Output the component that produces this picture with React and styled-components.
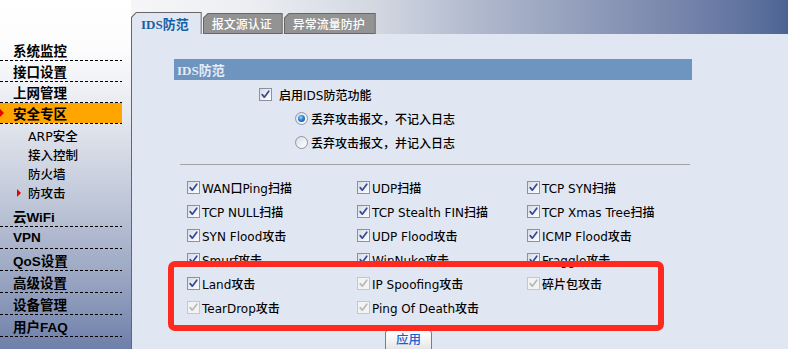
import React from 'react';
import styled, { createGlobalStyle } from 'styled-components';

const GlobalStyle = createGlobalStyle`
  html, body { margin: 0; padding: 0; }
  body {
    width: 788px; height: 349px; overflow: hidden; background: #e1e7f2;
    font-family: "DejaVu Sans", "Noto Sans CJK SC", sans-serif;
  }
  * { box-sizing: border-box; }
`;

const Page = styled.div`
  display: flex;
  width: 788px;
  height: 349px;
  overflow: hidden;
`;

/* ---------- sidebar ---------- */

const Sidebar = styled.nav`
  flex: none;
  width: 131px;
  height: 100%;
  padding-top: 40px;
  background: linear-gradient(to bottom, #ffffff 0%, #fcfcfd 14%, #e5e8ef 33%, #c4cbdb 55%, #9da8c4 78%, #6e7fa9 100%);
`;

const Menu = styled.div`
  width: 122px;
  display: flex;
  flex-direction: column;
`;

const dashLine = 'repeating-linear-gradient(to right, #000 0 3px, transparent 3px 5px)';

const MenuItem = styled.div`
  position: relative;
  height: ${p => (p.$tall ? 22 : 21)}px;
  padding: 0 0 1px 13px;
  display: flex;
  align-items: center;
  font: bold 13.5px "Liberation Sans", "Noto Sans CJK SC", sans-serif;
  color: #000;
  white-space: nowrap;
  background:
    ${dashLine} left bottom / 100% 1px no-repeat,
    linear-gradient(${p => (p.$active ? '#ffa500, #ffa500' : 'transparent, transparent')}) left top / 100% calc(100% - 1px) no-repeat;

  ${p => p.$active && `
    &::before {
      content: "";
      position: absolute;
      left: 0; top: 50%; margin-top: -5px;
      border-left: 4px solid #e60000;
      border-top: 4.5px solid transparent;
      border-bottom: 4.5px solid transparent;
    }
  `}
`;

const SubMenu = styled.div`
  display: flex;
  flex-direction: column;
  padding: 2px 0 3px;
`;

const SubItem = styled.div`
  position: relative;
  height: 19px;
  padding-left: 28px;
  display: flex;
  align-items: center;
  font: 500 12.5px "DejaVu Sans", "Noto Sans CJK SC", sans-serif;
  color: #000;
  white-space: nowrap;

  ${p => p.$current && `
    &::before {
      content: "";
      position: absolute;
      left: 17px; top: 50%; margin-top: -4px;
      border-left: 4px solid #e60000;
      border-top: 4px solid transparent;
      border-bottom: 4px solid transparent;
    }
  `}
`;

/* ---------- main ---------- */

const Main = styled.main`
  flex: 1;
  min-width: 0;
  display: flex;
  flex-direction: column;
`;

const TabBar = styled.div`
  flex: none;
  height: 34px;
  display: flex;
  align-items: flex-end;
  gap: 1px;
  background: linear-gradient(to right, #f6f6f8 0%, #eceef2 18%, #d1d6e0 38%, #afb8cd 53%, #949fbc 68%, #7584aa 84%, #5a6e9c 96%, #4b6391 100%);
`;

const Tab = styled.div`
  display: flex;
  height: ${p => (p.$active ? 22 : 21)}px;
  padding: 1px 1px ${p => (p.$active ? 0 : 1)}px 1px;
  background: #666;
  clip-path: polygon(5px 0, 100% 0, 100% 100%, 0 100%, 0 5px);
`;

const TabFace = styled.div`
  flex: 1;
  display: flex;
  align-items: center;
  padding: ${p => (p.$active ? '0 12px 0 9px' : '0 10px 0 8px')};
  background: ${p => (p.$active ? '#e1e7f2' : '#939393')};
  clip-path: polygon(4.5px 0, 100% 0, 100% 100%, 0 100%, 0 4.5px);
  color: ${p => (p.$active ? '#1660a6' : '#ffffff')};
  font: ${p => (p.$active
    ? 'bold 13px "Liberation Serif", "Noto Sans CJK SC", serif'
    : '500 12px "Noto Sans CJK SC", sans-serif')};
  white-space: nowrap;
`;

const Panel = styled.section`
  position: relative;
  flex: 1;
  background: #e1e7f2;
  border-left: 1px solid #666;
  padding: 25px 0 0 42px;
`;

const Form = styled.div`
  width: 518px;
  display: flex;
  flex-direction: column;
`;

const SectionTitle = styled.h2`
  margin: 0;
  height: 21px;
  padding-left: 3px;
  display: flex;
  align-items: center;
  background: #6e94c0;
  color: #e4ebf5;
  font: bold 13px "Liberation Serif", "Noto Sans CJK SC", serif;
`;

const OptionRow = styled.label`
  height: 24px;
  display: flex;
  align-items: center;
  gap: ${p => (p.$level === 2 ? 3 : 7)}px;
  padding-left: ${p => (p.$level === 2 ? 121 : 85)}px;
  margin-top: ${p => (p.$first ? 2 : 0)}px;
  font: 500 12px "DejaVu Sans", "Noto Sans CJK SC", sans-serif;
  color: #000;
  white-space: nowrap;
`;

const Divider = styled.hr`
  margin: 10px 0 10px 6px;
  width: 510px;
  height: 1px;
  border: 0;
  background: #a3a3a3;
`;

const CheckGrid = styled.div`
  margin-left: 13px;
  display: grid;
  grid-template-columns: repeat(3, 170px);
  grid-auto-rows: 24px;
`;

const CheckItem = styled.label`
  display: flex;
  align-items: center;
  gap: 2px;
  font: 500 12px "DejaVu Sans", "Noto Sans CJK SC", sans-serif;
  color: #000;
  white-space: nowrap;
`;

const Box = styled.span`
  flex: none;
  width: 13px;
  height: 13px;
  display: flex;
  align-items: center;
  justify-content: center;
  border: 1px solid ${p => (p.$disabled ? '#c6c6c6' : '#8a929e')};
  background: ${p => (p.$disabled
    ? '#f3f3f3'
    : 'linear-gradient(135deg, #d6dbe4 0%, #eef0f4 55%, #ffffff 100%)')};
`;

const Radio = styled.span`
  flex: none;
  width: 13px;
  height: 13px;
  border-radius: 50%;
  display: flex;
  align-items: center;
  justify-content: center;
  border: 1px solid #8796ab;
  background: linear-gradient(135deg, #d5dae3 0%, #f2f3f6 60%, #ffffff 100%);

  ${p => p.$checked && `
    &::after {
      content: "";
      width: 7px;
      height: 7px;
      border-radius: 50%;
      background: radial-gradient(circle at 40% 35%, #9bd6ff 0%, #2a7fd0 45%, #0b4c98 100%);
    }
  `}
`;

const ApplyButton = styled.button`
  margin: 11px 0 0 211px;
  width: 47px;
  height: 22px;
  padding: 0 0 3px;
  border: 1px solid #7d7d7d;
  border-radius: 3px;
  background: linear-gradient(to bottom, #ffffff 0%, #f3f3f3 50%, #e2e2e2 100%);
  color: #1a5fd0;
  font: 500 12.5px "Noto Sans CJK SC", sans-serif;
  display: flex;
  align-items: flex-start;
  justify-content: center;
  line-height: 16px;
`;

const Highlight = styled.div`
  position: absolute;
  left: 36px;
  top: 227px;
  width: 496px;
  height: 70px;
  border: 6px solid #ff2a1f;
  border-radius: 7px;
  pointer-events: none;
`;

function CheckBox({ disabled }) {
  return (
    <Box $disabled={disabled}>
      <svg width="11" height="11" viewBox="0 0 11 11">
        <path
          d="M2.2 5.6 L4.3 8.2 L8.8 2.2"
          fill="none"
          stroke={disabled ? '#b8b8b8' : '#34489a'}
          strokeWidth="1.7"
          strokeLinecap="round"
          strokeLinejoin="round"
        />
      </svg>
    </Box>
  );
}

const attacks = [
  { label: 'WAN口Ping扫描' },
  { label: 'UDP扫描' },
  { label: 'TCP SYN扫描' },
  { label: 'TCP NULL扫描' },
  { label: 'TCP Stealth FIN扫描' },
  { label: 'TCP Xmas Tree扫描' },
  { label: 'SYN Flood攻击' },
  { label: 'UDP Flood攻击' },
  { label: 'ICMP Flood攻击' },
  { label: 'Smurf攻击' },
  { label: 'WinNuke攻击' },
  { label: 'Fraggle攻击' },
  { label: 'Land攻击' },
  { label: 'IP Spoofing攻击', disabled: true },
  { label: '碎片包攻击', disabled: true },
  { label: 'TearDrop攻击', disabled: true },
  { label: 'Ping Of Death攻击', disabled: true },
];

export default function App() {
  return (
    <>
      <GlobalStyle />
      <Page>
        <Sidebar>
          <Menu>
            <MenuItem>系统监控</MenuItem>
            <MenuItem>接口设置</MenuItem>
            <MenuItem>上网管理</MenuItem>
            <MenuItem $active>安全专区</MenuItem>
            <SubMenu>
              <SubItem>ARP安全</SubItem>
              <SubItem>接入控制</SubItem>
              <SubItem>防火墙</SubItem>
              <SubItem $current>防攻击</SubItem>
            </SubMenu>
            <MenuItem $tall>云WiFi</MenuItem>
            <MenuItem $tall>VPN</MenuItem>
            <MenuItem $tall>QoS设置</MenuItem>
            <MenuItem $tall>高级设置</MenuItem>
            <MenuItem $tall>设备管理</MenuItem>
            <MenuItem $tall>用户FAQ</MenuItem>
          </Menu>
        </Sidebar>
        <Main>
          <TabBar>
            <Tab $active><TabFace $active>IDS防范</TabFace></Tab>
            <Tab><TabFace>报文源认证</TabFace></Tab>
            <Tab><TabFace>异常流量防护</TabFace></Tab>
          </TabBar>
          <Panel>
            <Form>
              <SectionTitle>IDS防范</SectionTitle>
              <OptionRow $first>
                <CheckBox />
                启用IDS防范功能
              </OptionRow>
              <OptionRow $level={2}>
                <Radio $checked />
                丢弃攻击报文，不记入日志
              </OptionRow>
              <OptionRow $level={2}>
                <Radio />
                丢弃攻击报文，并记入日志
              </OptionRow>
              <Divider />
              <CheckGrid>
                {attacks.map(a => (
                  <CheckItem key={a.label}>
                    <CheckBox disabled={a.disabled} />
                    {a.label}
                  </CheckItem>
                ))}
              </CheckGrid>
              <ApplyButton>应用</ApplyButton>
            </Form>
            <Highlight />
          </Panel>
        </Main>
      </Page>
    </>
  );
}
